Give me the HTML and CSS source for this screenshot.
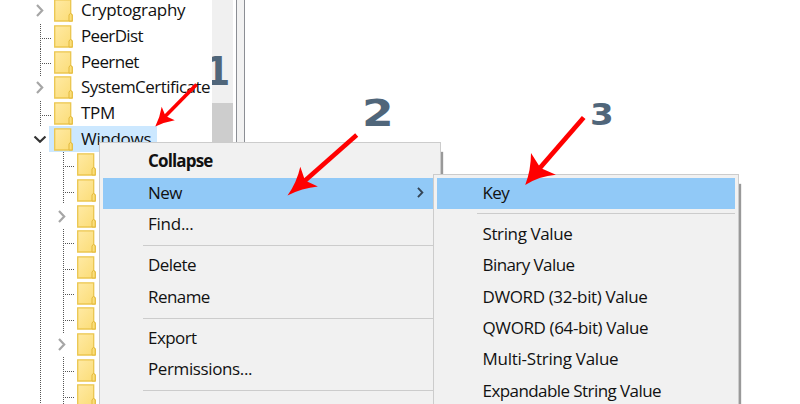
FILE: index.html
```
<!DOCTYPE html>
<html lang="en">
<head>
<meta charset="utf-8">
<title>Registry Editor</title>
<link rel="stylesheet" href="styles.css">
</head>
<body>
<svg width="0" height="0" class="defs">
  <defs>
    <linearGradient id="paper" x1="0" y1="0" x2="1" y2="1"><stop offset="0" stop-color="#ffeaa4"/><stop offset="1" stop-color="#fbdc76"/></linearGradient>
    <symbol id="folder" viewBox="0 0 19 23"><path d="M.7.8H16.7V14.5L18.2 16V22H.7Z" fill="url(#paper)" stroke="#ebc64f" stroke-width="1.3"/><path d="M15 22V16L16.5 14.2L18.2 16V22Z" fill="#fbdf7c" stroke="#e3b93c"/></symbol>
    <symbol id="chevron" viewBox="0 0 8 13"><path d="M1 1L6.2 6.5L1 12" fill="none" stroke="currentColor" stroke-width="2.2"/></symbol>
  </defs>
</svg>
<main class="window">
  <section class="tree">
    <div class="row"><span class="toggle"><svg><use href="#chevron"/></svg></span><svg class="folder"><use href="#folder"/></svg><span class="name wide">Cryptography</span></div>
    <div class="row leaf"><span class="toggle"></span><svg class="folder"><use href="#folder"/></svg><span class="name">PeerDist</span></div>
    <div class="row leaf last"><span class="toggle"></span><svg class="folder"><use href="#folder"/></svg><span class="name">Peernet</span></div>
    <div class="row"><span class="toggle"><svg><use href="#chevron"/></svg></span><svg class="folder"><use href="#folder"/></svg><span class="name system">SystemCertificate</span></div>
    <div class="row leaf last"><span class="toggle"></span><svg class="folder"><use href="#folder"/></svg><span class="name wide">TPM</span></div>
    <div class="row selected"><span class="toggle open"><svg><use href="#chevron"/></svg></span><svg class="folder"><use href="#folder"/></svg><span class="name wide">Windows</span></div>
    <div class="children">
      <div class="row leaf"><span class="toggle"></span><svg class="folder"><use href="#folder"/></svg></div>
      <div class="row leaf last"><span class="toggle"></span><svg class="folder"><use href="#folder"/></svg></div>
      <div class="row"><span class="toggle"><svg><use href="#chevron"/></svg></span><svg class="folder"><use href="#folder"/></svg></div>
      <div class="row leaf"><span class="toggle"></span><svg class="folder"><use href="#folder"/></svg></div>
      <div class="row leaf"><span class="toggle"></span><svg class="folder"><use href="#folder"/></svg></div>
      <div class="row leaf"><span class="toggle"></span><svg class="folder"><use href="#folder"/></svg></div>
      <div class="row leaf last"><span class="toggle"></span><svg class="folder"><use href="#folder"/></svg></div>
      <div class="row"><span class="toggle"><svg><use href="#chevron"/></svg></span><svg class="folder"><use href="#folder"/></svg></div>
      <div class="row leaf"><span class="toggle"></span><svg class="folder"><use href="#folder"/></svg></div>
      <div class="row leaf"><span class="toggle"></span><svg class="folder"><use href="#folder"/></svg></div>
    </div>
  </section>
  <div class="scrollbar"><div class="thumb"></div></div>
  <div class="splitter"></div>
</main>

<div class="menu context">
  <div class="item default"><span>Collapse</span></div>
  <div class="item active"><span>New</span><svg class="arrow"><use href="#chevron"/></svg></div>
  <div class="item wide"><span>Find...</span></div>
  <div class="rule"></div>
  <div class="item"><span>Delete</span></div>
  <div class="item"><span>Rename</span></div>
  <div class="rule"></div>
  <div class="item"><span>Export</span></div>
  <div class="item caps"><span>Permissions...</span></div>
  <div class="rule"></div>
</div>
<div class="menu submenu">
  <div class="item active"><span>Key</span></div>
  <div class="rule"></div>
  <div class="item caps"><span>String Value</span></div>
  <div class="item"><span>Binary Value</span></div>
  <div class="item caps"><span>DWORD (32-bit) Value</span></div>
  <div class="item caps"><span>QWORD (64-bit) Value</span></div>
  <div class="item wide"><span>Multi-String Value</span></div>
  <div class="item"><span>Expandable String Value</span></div>
</div>

<div class="step one"><span>1</span></div>
<div class="step two"><span>2</span></div>
<div class="step three"><span>3</span></div>
<svg class="arrows" viewBox="0 0 800 404">
  <g stroke="#f00" fill="none">
    <path d="M196.5 84.5L165 116.5" stroke-width="3.6"/>
    <path d="M356.7 135L304 181.5" stroke-width="4.6"/>
    <path d="M583.7 117.5L539 169" stroke-width="4.8"/>
  </g>
  <g fill="#f00">
    <path d="M155.3 126.5Q160 117 161.7 106.7L165.5 116L174.8 120.3Q165 122 155.3 126.5Z"/>
    <path d="M287.5 195.5Q297 182 300.3 166.7L305 180.5L317.9 186.5Q302 188 287.5 195.5Z"/>
    <path d="M525.2 185Q531 170 531 153L540.5 168L555.9 174.7Q539 176 525.2 185Z"/>
  </g>
</svg>
</body>
</html>
```

FILE: styles.css
```
html { overflow: hidden; }
* { box-sizing: border-box; }
body {
  margin: 0;
  width: 800px;
  height: 404px;
  position: relative;
  overflow: hidden;
  background: #fff;
  color: #111;
  font: 17px/25.7px "Open Sans", "Noto Sans", sans-serif;
}
.defs { position: absolute; }
.window { display: flex; height: 404px; overflow: hidden; }

.tree { width: 211.5px; height: 406.2px; margin-top: -2.2px; flex: none; white-space: nowrap; overflow: hidden; }
.row { display: flex; align-items: center; height: 25.7px; padding-left: 31px; position: relative; }
.toggle { width: 17px; height: 100%; display: flex; align-items: center; justify-content: center; flex: none; color: #a6a6a6; }
.toggle svg { width: 8px; height: 13px; }
.toggle.open { color: #333; }
.toggle.open svg { transform: rotate(90deg); }
.folder { width: 19px; height: 23px; margin: 0 8px 0 6px; flex: none; }
.name { letter-spacing: -.65px; padding-bottom: 1px; }
.name.wide { letter-spacing: -.3px; }
.name.system { letter-spacing: -.53px; }
.leaf::before, .leaf::after { content: ""; position: absolute; }
.leaf::before { left: 40px; top: 0; bottom: 0; width: 1px; background: repeating-linear-gradient(#555 0 1px, transparent 1px 2px); }
.leaf::after { left: 42px; top: 14px; width: 9px; height: 1px; background: repeating-linear-gradient(90deg, #555 0 1px, transparent 1px 2px); }
.leaf.last::before { bottom: -1px; }
.selected { background: linear-gradient(#cce8ff, #cce8ff) 49px 0 / 108px 100% no-repeat; }
.children { margin-left: 22.7px; position: relative; }
.children::before { content: ""; position: absolute; left: 17.3px; top: 0; bottom: 0; width: 1px; background: repeating-linear-gradient(#555 0 1px, transparent 1px 2px); }

.scrollbar { width: 21px; background: #f0f0f0; flex: none; padding-top: 103px; }
.thumb { height: 301px; background: #cdcdcd; }
.splitter { width: 9px; margin-left: 3px; border: solid #8b8e94; border-width: 0 1.5px; background: #f2f2f2; }

.menu { position: absolute; background: #f1f1f1; border: 1px solid #ccc; border-bottom: 0; box-shadow: 3px 9px 1px -1px #999; line-height: 30.4px; }
.context { left: 98.5px; top: 142px; width: 342.5px; height: 262px; padding: 3.2px 7px 0 3px; }
.submenu { left: 433px; top: 173.5px; width: 306px; height: 230.5px; padding: 3.1px 3px 0; }
.item { display: flex; align-items: center; justify-content: space-between; height: 31.4px; padding: 0 0 1px 45.5px; white-space: nowrap; letter-spacing: -.57px; }
.item.wide { letter-spacing: -.25px; }
.item.caps { letter-spacing: -.38px; }
.active { background: #91c9f7; }
.item.default { font-weight: 700; letter-spacing: -.85px; }
.arrow { width: 7px; height: 11px; margin-right: 9px; color: #345; }
.rule { height: 9.9px; margin-left: 40px; padding-top: 4.5px; }
.rule::before { content: ""; display: block; height: 1px; background: #ccc; }

.step { position: absolute; color: #50667a; font: 700 39px/40px "DejaVu Sans", sans-serif; }
.step span { display: block; transform-origin: 0 0; }
.one { left: 211.5px; top: 51.5px; width: 18px; height: 42px; overflow: hidden; }
.one span { margin-left: -7px; transform: scaleX(.93); }
.two { left: 361.5px; top: 94px; width: 35px; height: 42px; font-size: 37px; }
.two span { transform: scaleX(1.23); }
.three { left: 590px; top: 93.5px; width: 30px; height: 42px; font-size: 31px; }
.three span { transform: scaleX(1.1); }
.arrows { position: absolute; left: 0; top: 0; width: 800px; height: 404px; }
```
